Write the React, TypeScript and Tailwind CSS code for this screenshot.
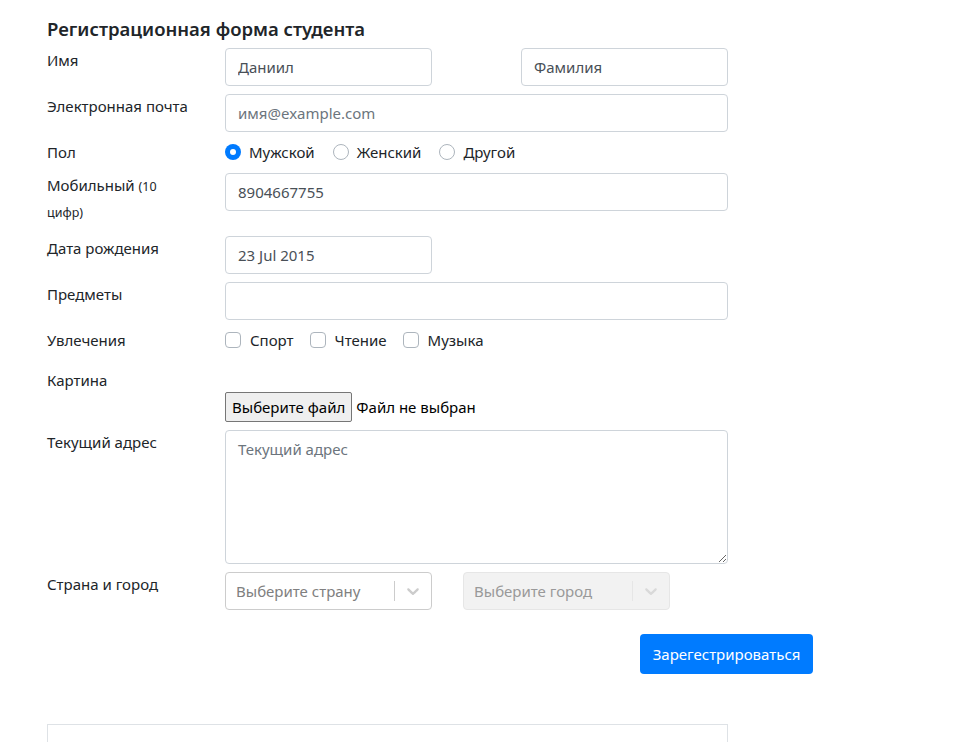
import React from 'react';

const inputCls =
  'block h-[38px] px-3 border border-[#ced4da] rounded-[4px] bg-white text-[15px] text-[#495057] placeholder:text-[#6c757d] outline-none';

const Label: React.FC<{ children: React.ReactNode }> = ({ children }) => (
  <label className="w-[178px] shrink-0 pr-3 text-[15px] leading-6 text-[#212529]">{children}</label>
);

const Radio: React.FC<{ label: string; checked?: boolean }> = ({ label, checked }) => (
  <span className="flex items-center mr-[18px]">
    {checked ? (
      <span className="w-4 h-4 rounded-full bg-[#007bff] flex items-center justify-center">
        <span className="w-[6px] h-[6px] rounded-full bg-white" />
      </span>
    ) : (
      <span className="w-4 h-4 rounded-full border border-[#adb5bd] bg-white" />
    )}
    <span className="ml-2 text-[15px] leading-6">{label}</span>
  </span>
);

const Check: React.FC<{ label: string }> = ({ label }) => (
  <span className="flex items-center mr-4">
    <span className="w-4 h-4 rounded-[4px] border border-[#adb5bd] bg-white" />
    <span className="ml-[9px] text-[15px] leading-6">{label}</span>
  </span>
);

const Chevron: React.FC<{ color: string }> = ({ color }) => (
  <svg width="20" height="20" viewBox="0 0 20 20" fill={color}>
    <path d="M4.516 7.548c0.436-0.446 1.043-0.481 1.576 0l3.908 3.747 3.908-3.747c0.533-0.481 1.141-0.446 1.574 0 0.436 0.445 0.408 1.197 0 1.615-0.406 0.418-4.695 4.502-4.695 4.502-0.217 0.223-0.502 0.335-0.787 0.335s-0.57-0.112-0.789-0.335c0 0-4.287-4.084-4.695-4.502s-0.436-1.17 0-1.615z" />
  </svg>
);

export default function App() {
  return (
    <div className="min-h-screen bg-white font-['Noto_Sans',sans-serif] text-[#212529]">
      <div className="w-[681px] ml-[47px] pt-[17px]">
        <h5 className="text-[18.5px] font-semibold leading-6 mb-[7px]">Регистрационная форма студента</h5>

        <form>
          <div className="flex h-[38px] mb-2">
            <Label>Имя</Label>
            <div className="flex-1 flex justify-between">
              <input className={`${inputCls} w-[207px]`} defaultValue="Даниил" />
              <input className={`${inputCls} w-[207px]`} defaultValue="Фамилия" />
            </div>
          </div>

          <div className="flex h-[38px] mb-2">
            <Label>Электронная почта</Label>
            <input className={`${inputCls} flex-1`} placeholder="имя@example.com" />
          </div>

          <div className="flex h-[25px] mb-2">
            <Label>Пол</Label>
            <div className="flex items-start">
              <Radio label="Мужской" checked />
              <Radio label="Женский" />
              <Radio label="Другой" />
            </div>
          </div>

          <div className="flex h-[55px] mb-2">
            <label className="w-[178px] shrink-0 pr-10 text-[15px] leading-6">
              Мобильный <span className="text-[12.5px]">(10</span> <span className="text-[12.5px]">цифр)</span>
            </label>
            <input className={`${inputCls} flex-1`} defaultValue="8904667755" />
          </div>

          <div className="flex h-[38px] mb-2">
            <Label>Дата рождения</Label>
            <input className={`${inputCls} w-[207px]`} defaultValue="23 Jul 2015" />
          </div>

          <div className="flex h-[38px] mb-2">
            <Label>Предметы</Label>
            <input className={`${inputCls} flex-1`} />
          </div>

          <div className="flex h-[32px] mb-2">
            <Label>Увлечения</Label>
            <div className="flex items-start">
              <Check label="Спорт" />
              <Check label="Чтение" />
              <Check label="Музыка" />
            </div>
          </div>

          <div className="flex h-[54px] mb-2">
            <Label>Картина</Label>
            <div className="flex-1 pt-6">
              <div className="flex items-center">
                <span className="h-[30px] px-[6px] flex items-center border border-[#767676] rounded-[2px] bg-[#efefef] text-[15px] text-black">
                  Выберите файл
                </span>
                <span className="ml-1 text-[15px] text-black">Файл не выбран</span>
              </div>
            </div>
          </div>

          <div className="flex h-[134px] mb-2">
            <Label>Текущий адрес</Label>
            <textarea
              className="flex-1 h-[134px] px-3 py-[6px] border border-[#ced4da] rounded-[4px] text-[15px] leading-6 text-[#495057] placeholder:text-[#6c757d] outline-none"
              placeholder="Текущий адрес"
            />
          </div>

          <div className="flex h-[38px]">
            <Label>Страна и город</Label>
            <div className="flex gap-[31px]">
              <div className="w-[207px] h-[38px] flex items-center border border-[#cccccc] rounded-[4px] bg-white">
                <span className="flex-1 pl-[10px] text-[15px] text-[#808080]">Выберите страну</span>
                <span className="w-px h-[20px] bg-[#cccccc]" />
                <span className="px-2 flex items-center">
                  <Chevron color="#cccccc" />
                </span>
              </div>
              <div className="w-[207px] h-[38px] flex items-center border border-[#e6e6e6] rounded-[4px] bg-[#f2f2f2]">
                <span className="flex-1 pl-[10px] text-[15px] text-[#999999]">Выберите город</span>
                <span className="w-px h-[20px] bg-[#e6e6e6]" />
                <span className="px-2 flex items-center">
                  <Chevron color="#d9d9d9" />
                </span>
              </div>
            </div>
          </div>

          <div className="mt-6 ml-[593px]">
            <button
              type="button"
              className="w-[173px] h-[40px] rounded-[4px] bg-[#007bff] text-white text-[15px]"
            >
              Зарегестрироваться
            </button>
          </div>
        </form>

        <div className="mt-[50px] h-[60px] border border-[#dee2e6] border-b-0" />
      </div>
    </div>
  );
}
